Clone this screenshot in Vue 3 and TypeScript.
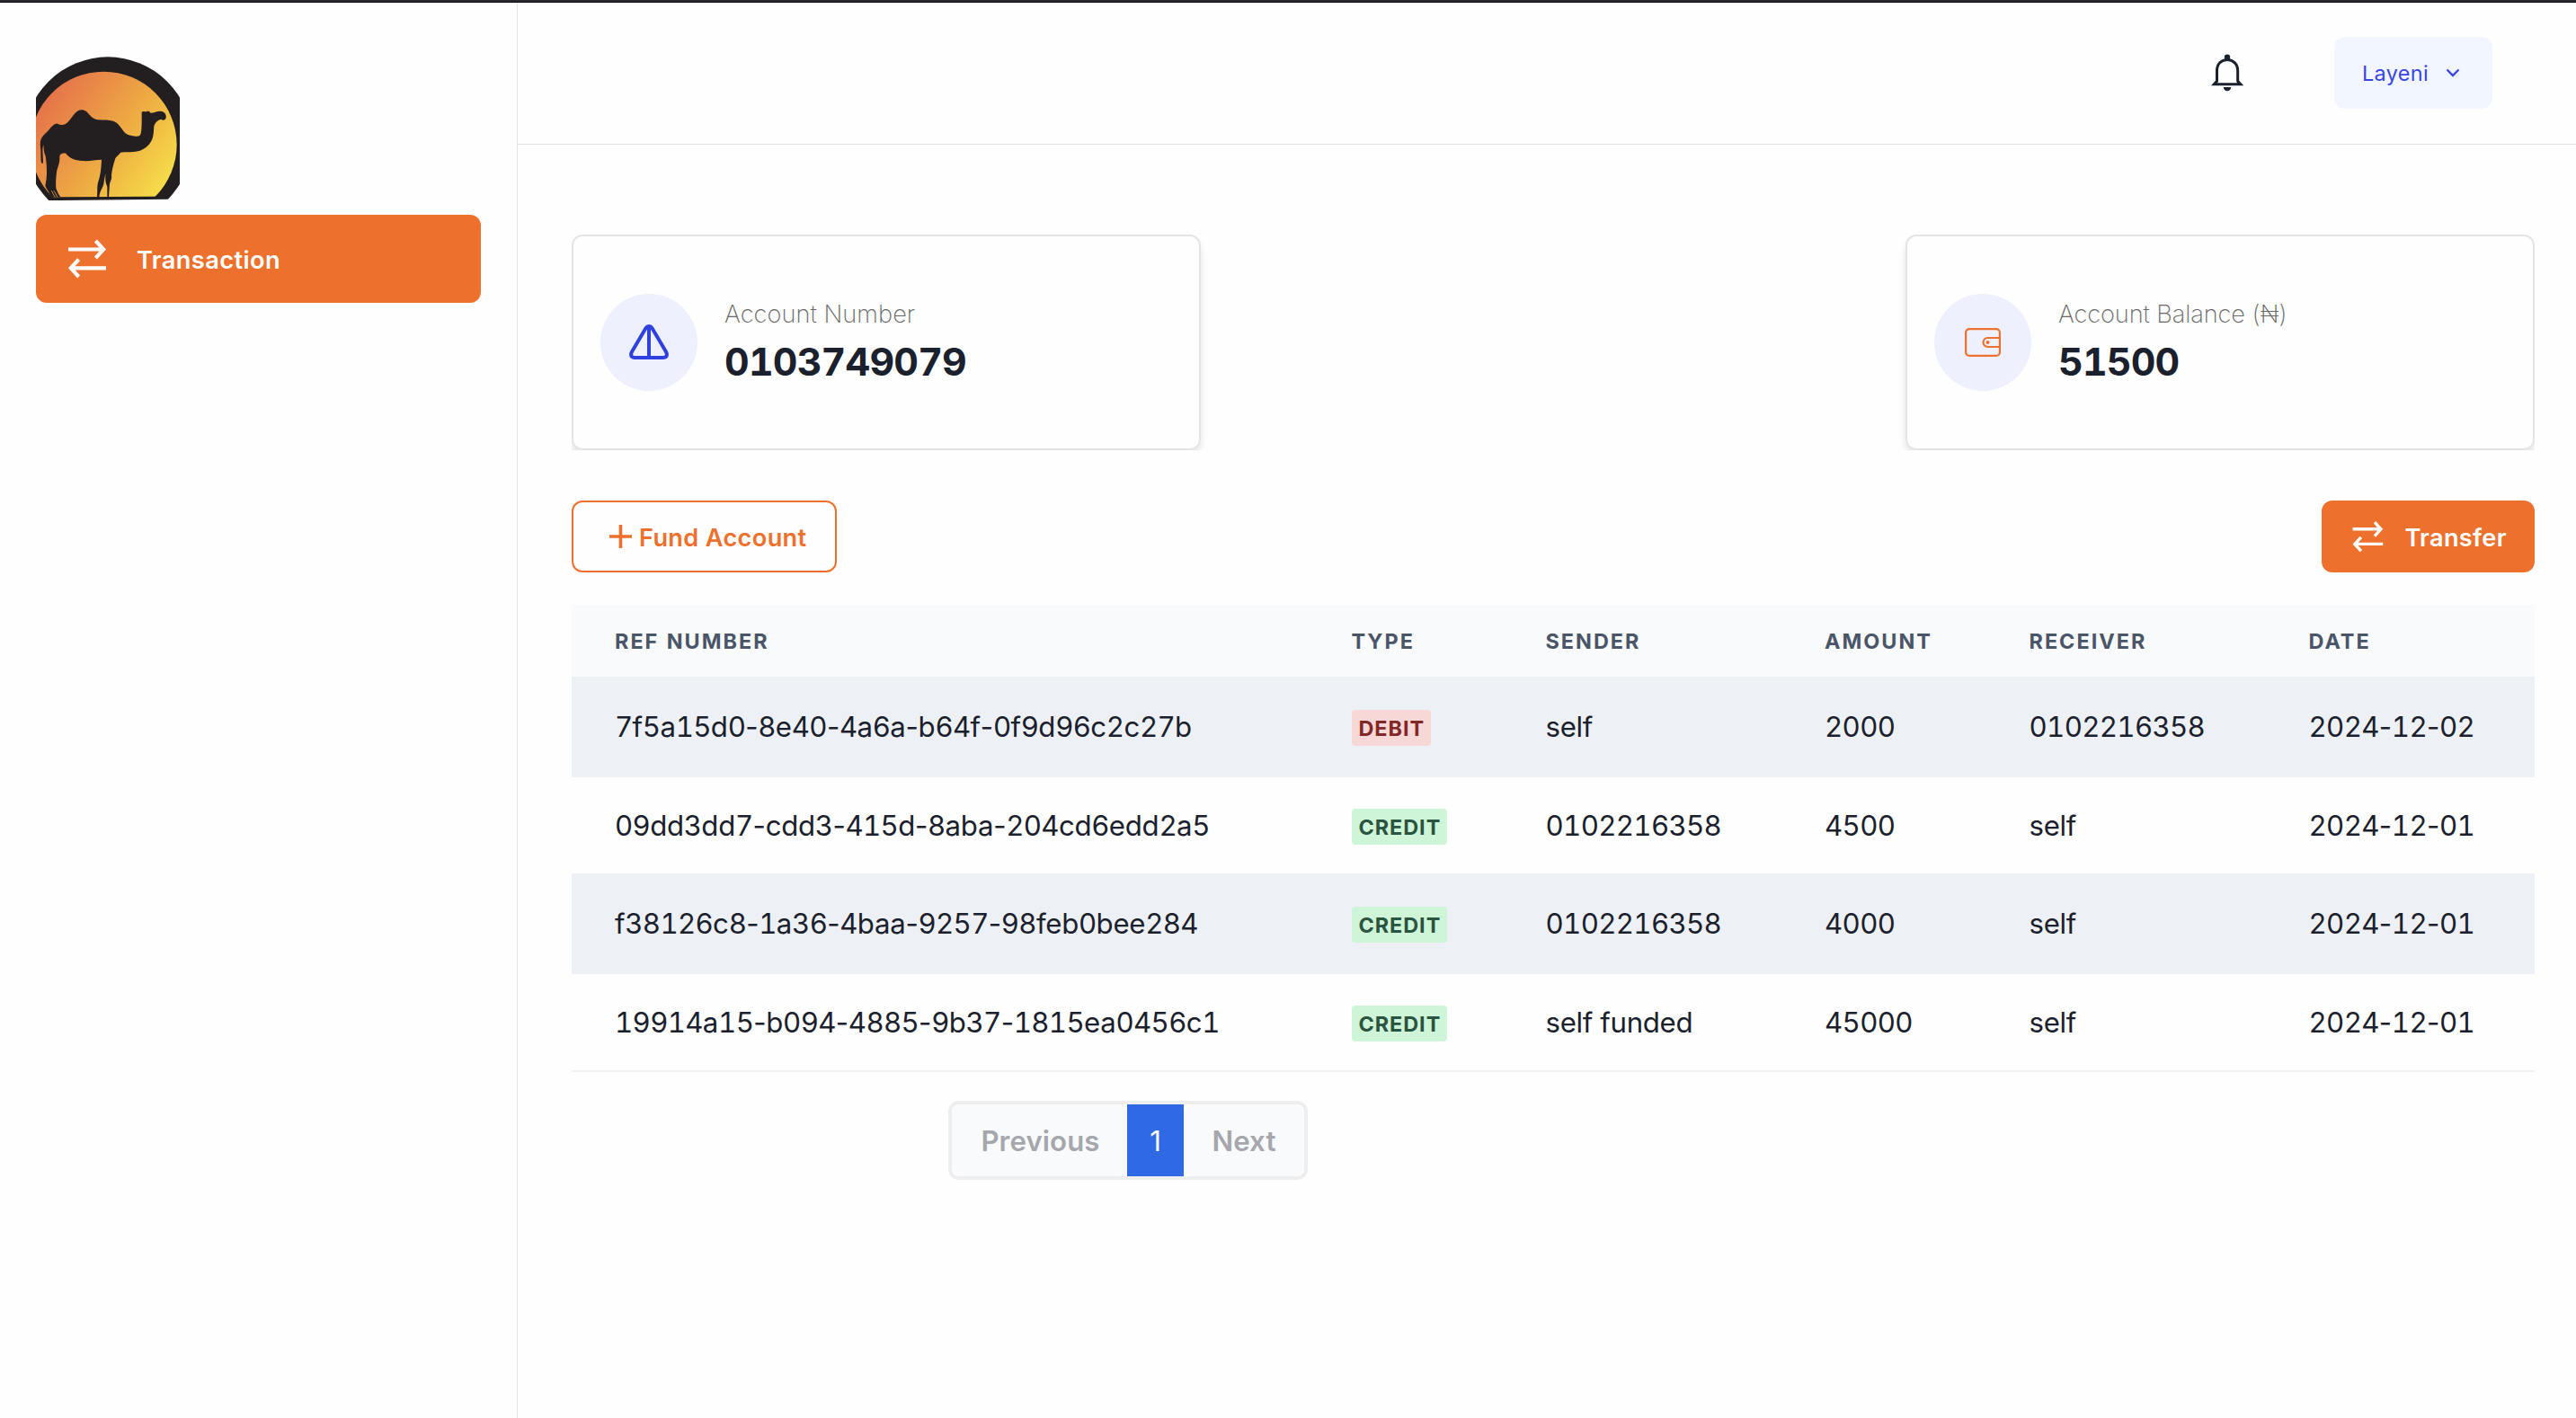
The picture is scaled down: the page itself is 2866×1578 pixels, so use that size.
<script setup lang="ts">
interface Transaction {
  id: string
  type: 'DEBIT' | 'CREDIT'
  sender: string
  amount: string
  receiver: string
  date: string
}

interface Piece {
  text: string
  kind: 'digits' | 'dash' | 'letters'
}

const columns: string[] = ['Ref Number', 'Type', 'Sender', 'Amount', 'Receiver', 'Date']

const transactions: Transaction[] = [
  { id: '7f5a15d0-8e40-4a6a-b64f-0f9d96c2c27b', type: 'DEBIT', sender: 'self', amount: '2000', receiver: '0102216358', date: '2024-12-02' },
  { id: '09dd3dd7-cdd3-415d-8aba-204cd6edd2a5', type: 'CREDIT', sender: '0102216358', amount: '4500', receiver: 'self', date: '2024-12-01' },
  { id: 'f38126c8-1a36-4baa-9257-98feb0bee284', type: 'CREDIT', sender: '0102216358', amount: '4000', receiver: 'self', date: '2024-12-01' },
  { id: '19914a15-b094-4885-9b37-1815ea0456c1', type: 'CREDIT', sender: 'self funded', amount: '45000', receiver: 'self', date: '2024-12-01' },
]

// Digits are tabular, hyphens keep their natural width, letters are tracked on their own.
const pieces = (value: string): Piece[] =>
  value
    .split(/(\d+|-)/)
    .filter(Boolean)
    .map((text) => ({ text, kind: text === '-' ? 'dash' : /^\d/.test(text) ? 'digits' : 'letters' }))
</script>

<template>
  <div class="app">
    <div class="window-edge"></div>
    <div class="layout">
      <aside class="sidebar">
        <svg class="logo" viewBox="60 68 480 480">
          <defs>
            <linearGradient id="sun" gradientUnits="userSpaceOnUse" x1="95" y1="225" x2="510" y2="525">
              <stop offset="0" stop-color="#e6764a" />
              <stop offset="0.5" stop-color="#edaa43" />
              <stop offset="1" stop-color="#f7e34a" />
            </linearGradient>
            <clipPath id="ground"><path d="M40 60H560V543.500L495 544.500L40 549Z" /></clipPath>
            <clipPath id="horizon"><path d="M40 60H560V534L40 538Z" /></clipPath>
          </defs>
          <circle cx="300" cy="349" r="280" fill="#231f20" clip-path="url(#ground)" />
          <circle cx="286" cy="362" r="244" fill="url(#sun)" clip-path="url(#horizon)" />
          <path
            fill="#231f20"
            d="M75 350C78 336 90 325 100 316C111 304 121 290 132 292C142 297 150 297 160 292C178 282 188 246 212 246C238 246 236 276 268 279C286 281 304 278 320 284C344 294 350 325 370 330C385 335 400 336 407 331C414 322 413 290 413 253C418 249 424 252 428 252C434 249 440 251 442 256C455 256 462 250 475 250C490 250 496 262 494 273C491 281 484 282 478 277C468 279 459 286 455 297C452 308 455 320 450 337C444 360 425 377 400 384C380 389 358 386 342 388C337 397 328 400 325 408C318 430 313 450 312 465C314 478 308 484 306 494L303 537H298L298 502C292 490 290 475 293 458C287 475 288 490 284 500C276 515 272 525 271 537H264C266 520 263 500 268 486C275 465 278 440 279 412C255 412 240 418 215 416C190 414 172 408 160 391C148 389 140 392 139 402C141 425 130 440 129 455C126 475 126 490 127 508C132 520 136 529 142 537H110C104 518 92 508 91 498C97 475 98 440 92 400C86 388 86 376 85 362C80 375 83 388 83 400C84 415 85 425 81 425C75 420 77 405 76 395C78 380 72 365 75 350Z"
          />
          <path fill="none" stroke="#eba643" stroke-width="2.500" d="M112 516C116 524 120 530 124 537M119 516C125 522 128 530 132 537" />
        </svg>
        <a class="nav-item">
          <svg class="swap" viewBox="0 0 48 48" fill="none" stroke="currentColor" stroke-width="4.200">
            <path d="M2 13.500H42M32.400 4L41.200 13.500L32.400 23.200M44 34.300H5M13.600 24.800L4.800 34.300L13.600 44" />
          </svg>
          <span>Transaction</span>
        </a>
      </aside>

      <div class="main">
        <header class="topbar">
          <svg class="bell" viewBox="180 180 108 126">
            <path d="M190 281.500L199.500 271V236C199.500 214 214 199.500 234 199.500S269 214 269 236V271L278.500 281.500Z" fill="none" stroke="#1a202c" stroke-width="9" />
            <circle cx="234" cy="191" r="9.500" fill="#1a202c" />
            <path d="M221.500 291H246.500A12.500 12.500 0 0 1 221.500 291Z" fill="#1a202c" />
          </svg>
          <button class="user">
            <span>Layeni</span>
            <svg class="chevron" viewBox="0 0 16 10" fill="none" stroke="currentColor" stroke-width="2.400">
              <path d="M1.500 1.500L8 8L14.500 1.500" />
            </svg>
          </button>
        </header>

        <main class="content">
          <section class="cards">
            <div class="card">
              <div class="disc">
                <svg width="44" height="39" viewBox="0 0 44 39" fill="none" stroke="#2f41de" stroke-width="4">
                  <path d="M18.600 4L3 30.500C1 34.500 2.500 37 6.500 37H37.500C41.500 37 43 34.500 41 30.500L25.400 4C23.800 1.400 20.200 1.400 18.600 4ZM22 3V37" />
                </svg>
              </div>
              <div>
                <div class="label">Account Number</div>
                <div class="figure">0103749079</div>
              </div>
            </div>
            <div class="card">
              <div class="disc">
                <svg width="40" height="32" viewBox="0 0 40 32" fill="none" stroke="#ed702d" stroke-width="2.200">
                  <rect x="1.100" y="1.100" width="37.800" height="29.800" rx="4" />
                  <path d="M39 11H25.500A5 5 0 0 0 25.500 21H39" />
                  <circle cx="25.500" cy="16" r="2" fill="#ed702d" stroke="none" />
                </svg>
              </div>
              <div>
                <div class="label balance">Account Balance (₦)</div>
                <div class="figure">51500</div>
              </div>
            </div>
          </section>

          <section class="actions">
            <button class="btn outline">
              <svg width="25" height="26" viewBox="0 0 25 26" stroke="currentColor" stroke-width="3.600">
                <path d="M12.500 0V26M0 13H25" />
              </svg>
              <span>Fund Account</span>
            </button>
            <button class="btn solid">
              <svg class="swap small" viewBox="0 0 48 48" fill="none" stroke="currentColor" stroke-width="4.200">
                <path d="M2 13.500H42M32.400 4L41.200 13.500L32.400 23.200M44 34.300H5M13.600 24.800L4.800 34.300L13.600 44" />
              </svg>
              <span>Transfer</span>
            </button>
          </section>

          <div class="table">
            <div class="row head">
              <div v-for="column in columns" :key="column" class="cell">{{ column }}</div>
            </div>
            <div v-for="item in transactions" :key="item.id" class="row">
              <div class="cell">
                <span v-for="(piece, i) in pieces(item.id)" :key="i" :class="piece.kind">{{ piece.text }}</span>
              </div>
              <div class="cell"><span class="badge" :class="item.type.toLowerCase()">{{ item.type }}</span></div>
              <div class="cell">
                <span v-for="(piece, i) in pieces(item.sender)" :key="i" :class="piece.kind">{{ piece.text }}</span>
              </div>
              <div class="cell"><span class="digits">{{ item.amount }}</span></div>
              <div class="cell">
                <span v-for="(piece, i) in pieces(item.receiver)" :key="i" :class="piece.kind">{{ piece.text }}</span>
              </div>
              <div class="cell">
                <span v-for="(piece, i) in pieces(item.date)" :key="i" :class="piece.kind">{{ piece.text }}</span>
              </div>
            </div>
          </div>

          <nav class="pager">
            <button class="page-step previous">Previous</button>
            <button class="page-number">1</button>
            <button class="page-step next">Next</button>
          </nav>
        </main>
      </div>
    </div>
  </div>
</template>

<style>
body {
  background: #fefefe;
}
</style>

<style scoped>
.app {
  display: flex;
  flex-direction: column;
  height: 1578px;
  overflow: hidden;
  font-family: Inter, 'Liberation Sans', sans-serif;
  color: #1a202c;
  background: #fefefe;
}
.app *,
.app {
  box-sizing: border-box;
}
button {
  font: inherit;
  border: 0;
  margin: 0;
  padding: 0;
  background: none;
}
svg {
  display: block;
  flex: none;
}
.window-edge {
  flex: none;
  height: 3px;
  background: #28272e;
  border-bottom: 1px solid #0d0d10;
}
.layout {
  display: flex;
  flex: 1;
}
.sidebar {
  width: 576px;
  padding: 60px 40px 0;
  border-right: 1px solid #e2e4e8;
}
.logo {
  width: 160px;
  height: 160px;
}
.nav-item {
  display: flex;
  align-items: center;
  gap: 30px;
  height: 98px;
  margin-top: 16px;
  padding-left: 34px;
  border-radius: 12px;
  background: #ed702d;
  color: #fff;
  font-size: 27.200px;
  font-weight: 600;
  letter-spacing: 0.415px;
}
.nav-item span {
  padding-top: 2px;
}
.swap {
  width: 48px;
  height: 48px;
}
.swap.small {
  width: 38.400px;
  height: 38.400px;
}
.main {
  flex: 1;
}
.topbar {
  display: flex;
  align-items: center;
  justify-content: flex-end;
  height: 158px;
  padding: 0 93px 1px 0;
  border-bottom: 1px solid #e2e4e8;
}
.bell {
  width: 36px;
  height: 42px;
}
.user {
  display: flex;
  align-items: center;
  width: 176px;
  height: 80px;
  margin-left: 101px;
  padding-left: 31px;
  border-radius: 12px;
  background: #f2f7ff;
  color: #3a45e0;
  font-size: 23.400px;
  letter-spacing: 0.367px;
}
.chevron {
  width: 16px;
  height: 10px;
  margin-left: 19px;
}
.content {
  padding: 100px 46px 0 60px;
}
.cards {
  display: flex;
  justify-content: space-between;
  height: 239.500px;
  overflow: hidden;
}
.card {
  display: flex;
  align-items: center;
  gap: 30px;
  width: 700px;
  height: 239.500px;
  padding-left: 30px;
  border: 2px solid #e4e4e4;
  border-radius: 12px;
  box-shadow: 0 8px 12px -2px rgba(0, 0, 0, 0.1), 0 4px 8px -2px rgba(0, 0, 0, 0.06);
}
.disc {
  display: flex;
  align-items: center;
  justify-content: center;
  width: 108px;
  height: 108px;
  border-radius: 50%;
  background: #eff0fe;
}
.label {
  font-size: 27.200px;
  font-weight: 200;
  line-height: 42px;
  letter-spacing: 0.050px;
  color: #686868;
}
.label.balance {
  letter-spacing: -0.100px;
}
.figure {
  font-size: 42.800px;
  font-weight: 650;
  line-height: 65px;
  letter-spacing: -0.770px;
  font-variant-numeric: tabular-nums;
  margin-top: -1px;
  margin-bottom: -3px;
}
.actions {
  display: flex;
  justify-content: space-between;
  margin-top: 56.500px;
}
.btn {
  display: flex;
  align-items: center;
  height: 80px;
  border-radius: 12px;
  font-size: 27.200px;
  font-weight: 600;
  letter-spacing: 0.320px;
}
.btn span {
  padding-top: 2px;
}
.outline {
  width: 295px;
  padding-left: 40px;
  gap: 8px;
  border: 2px solid #ed702d;
  color: #ed702d;
}
.solid {
  width: 237px;
  padding-left: 33px;
  gap: 21px;
  background: #ed702d;
  color: #fff;
}
.table {
  margin-top: 36px;
  font-variant-numeric: lining-nums tabular-nums;
}
.row {
  display: grid;
  grid-template-columns: 819.500px 216px 310.500px 227.500px 311px 1fr;
  align-items: center;
  height: 109.500px;
  border-bottom: 2px solid #edf1f6;
}
.row:nth-child(even) {
  background: #edf0f5;
}
.row:nth-child(n + 3) .cell {
  padding-top: 1px;
}
.cell {
  padding-left: 48px;
  font-size: 31.200px;
}
.digits {
  letter-spacing: -0.660px;
}
.letters {
  letter-spacing: -0.280px;
}
.dash {
  letter-spacing: -0.300px;
  font-variant-numeric: normal;
}
.head {
  height: 82px;
  background: #f9fafc;
}
.head .cell {
  font-size: 23.400px;
  font-weight: 700;
  letter-spacing: 2.020px;
  text-transform: uppercase;
  color: #4a5568;
}
.badge {
  display: block;
  width: fit-content;
  height: 40px;
  margin-top: 2px;
  padding: 0 7px 0 8px;
  border-radius: 4px;
  font-size: 23.400px;
  font-weight: 700;
  line-height: 41px;
  letter-spacing: 0.960px;
}
.debit {
  background: #f8d7d7;
  color: #822727;
}
.credit {
  background: #cff5d9;
  color: #2a5440;
}
.pager {
  display: flex;
  width: 400px;
  height: 88px;
  margin: 32px 0 0 419px;
  border: 4px solid #eee;
  border-radius: 12px;
  font-size: 31.200px;
}
.pager button {
  padding-top: 1px;
}
.page-step {
  border-radius: 12px;
  background: #f9fafc;
  color: #a5a7ac;
  font-weight: 600;
  letter-spacing: 0.100px;
}
.pager .previous {
  width: 195px;
  padding-left: 2px;
}
.next {
  flex: 1;
}
.page-number {
  width: 63px;
  background: #2f69e6;
  color: #fff;
}
</style>
